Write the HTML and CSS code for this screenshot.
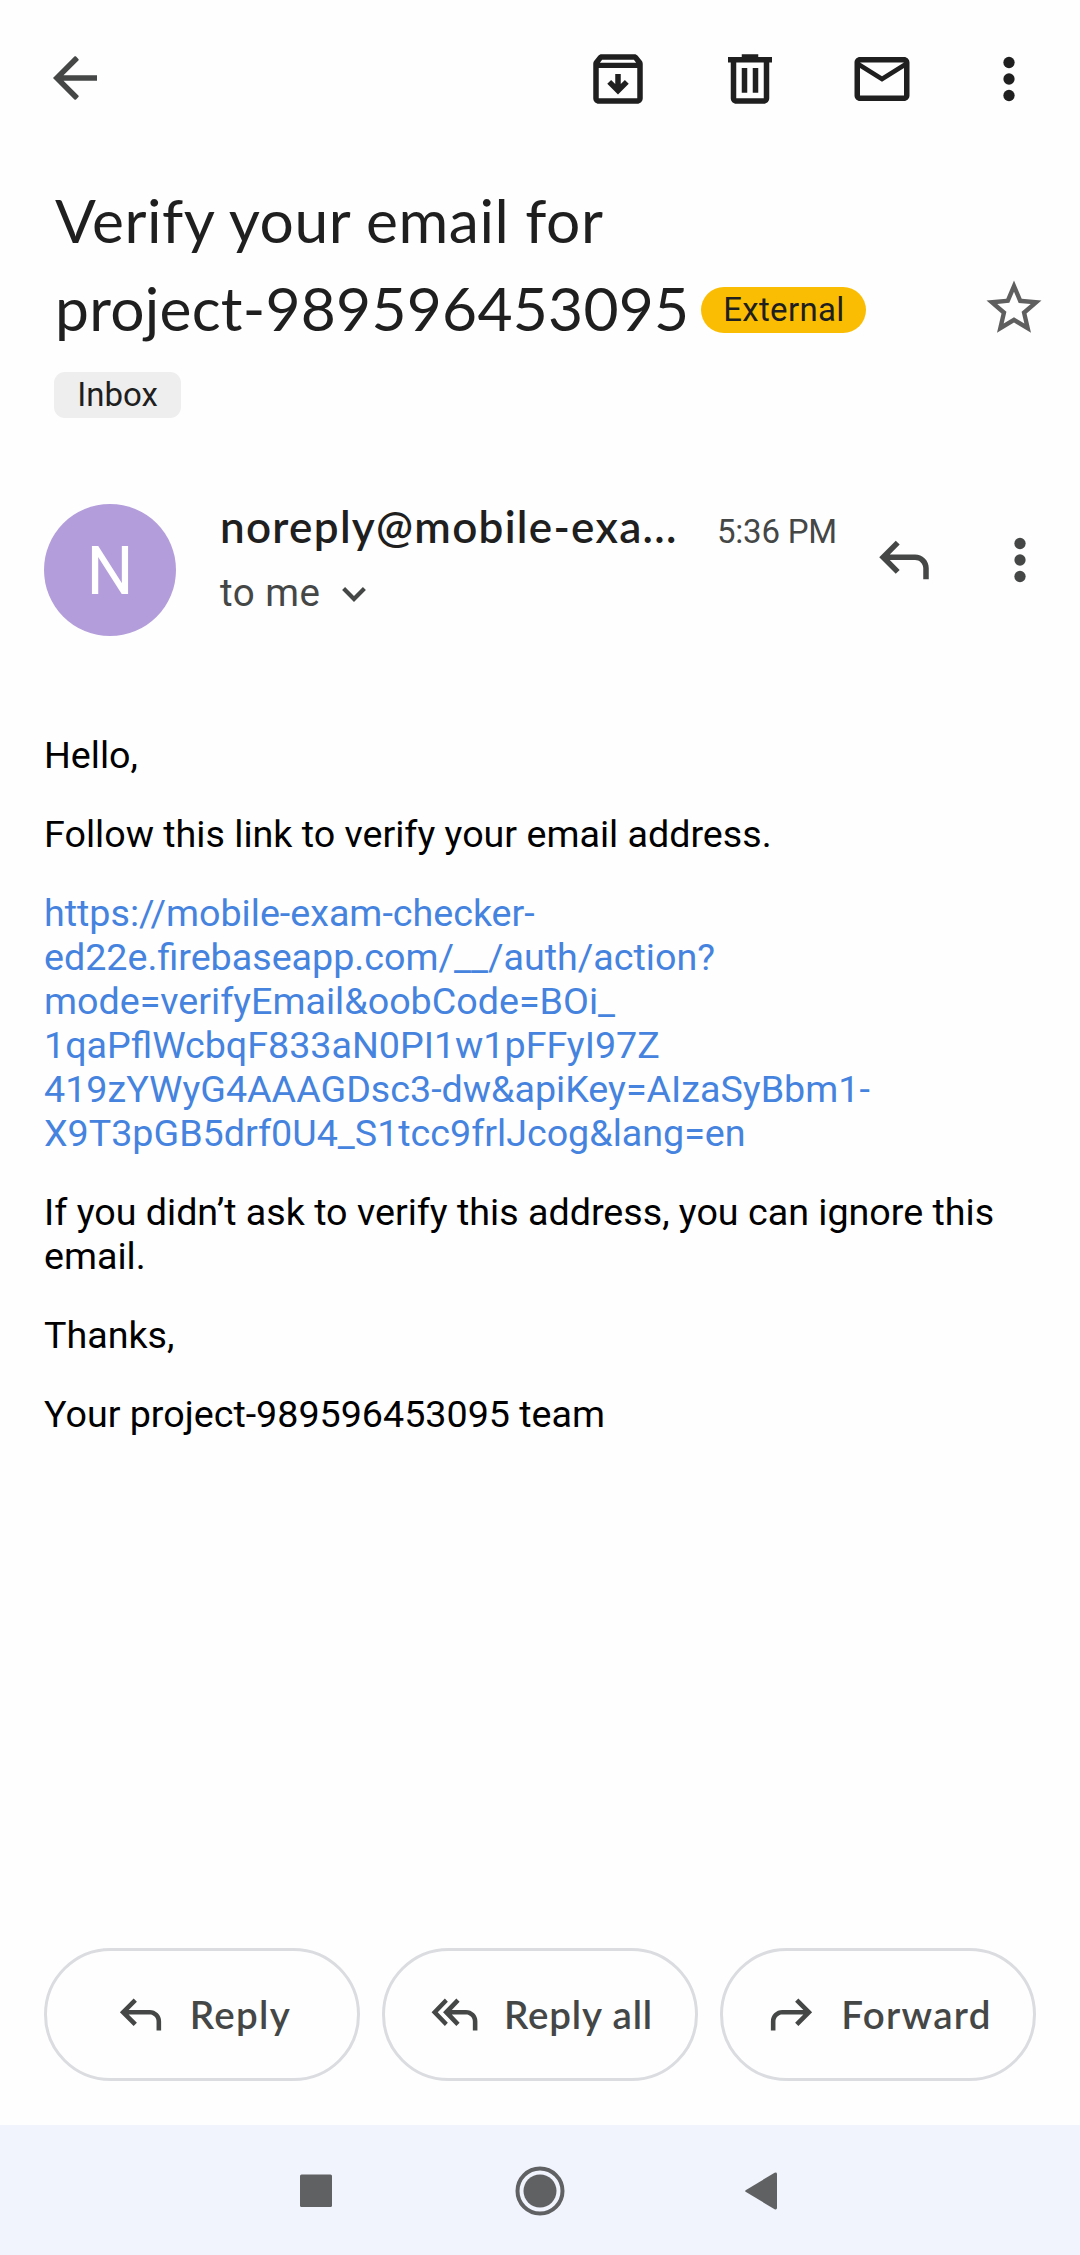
FILE: index.html
```html
<!DOCTYPE html>
<html lang="en">
<head>
<meta charset="utf-8">
<title>Verify your email for project-989596453095</title>
<link rel="stylesheet" href="styles.css">
</head>
<body>
<header class="toolbar">
  <svg class="icon icon-back" viewBox="0 0 24 24"><path d="M20 11H7.83l5.4-5.4c.2-.2.2-.35 0-.55l-.85-.85c-.2-.2-.4-.2-.6 0L4 12l7.78 7.8c.2.2.4.2.6 0l.85-.85c.2-.2.2-.35 0-.55L7.83 13H20z"/></svg>
  <div class="toolbar-actions">
    <svg class="icon" viewBox="0 0 24 24"><path fill-rule="evenodd" d="M20.54 5.23l-1.39-1.68C18.88 3.21 18.47 3 18 3H6c-.47 0-.88.21-1.16.55L3.46 5.23C3.17 5.57 3 6.02 3 6.5V19c0 1.1.9 2 2 2h14c1.1 0 2-.9 2-2V6.5c0-.48-.17-.93-.46-1.27zM6.24 5h11.52l.83 1.1H5.42zM5 19V8h14v11zM11 10.2h2v3.6l1.5-1.45 1.4 1.4-3.9 3.9-3.9-3.9 1.4-1.4 1.5 1.45z"/></svg>
    <svg class="icon" viewBox="0 0 24 24"><path fill-rule="evenodd" d="M15 4V3H9v1H4v2h1v13c0 1.1.9 2 2 2h10c1.1 0 2-.9 2-2V6h1V4zm2 15H7V6h10zM9 8h2v9H9zm4 0h2v9h-2z"/></svg>
    <svg class="icon" viewBox="0 0 24 24"><path fill-rule="evenodd" d="M22 6c0-1.1-.9-2-2-2H4c-1.1 0-2 .9-2 2v12c0 1.1.9 2 2 2h16c1.1 0 2-.9 2-2zm-2 0l-8 5-8-5zm0 12H4V8l8 5 8-5z"/></svg>
    <svg class="icon icon-more" viewBox="0 0 24 24"><circle cx="12" cy="6" r="2.05"/><circle cx="12" cy="12" r="2.05"/><circle cx="12" cy="18" r="2.05"/></svg>
  </div>
</header>

<section class="subject">
  <div>
    <h1 class="subject-title">Verify your email for<br><span class="subject-project">project-989596453095</span><span class="chip chip-external">External</span></h1>
    <span class="chip chip-inbox">Inbox</span>
  </div>
  <svg class="icon icon-star" viewBox="0 0 24 24"><path fill-rule="evenodd" d="M22 9.24l-7.19-.62L12 2 9.19 8.63 2 9.24l5.46 4.73L5.82 21 12 17.27 18.18 21l-1.63-7.03zM12 15.4l-3.76 2.27 1-4.28-3.32-2.88 4.38-.38L12 6.1l1.71 4.04 4.38.38-3.32 2.88 1 4.28z"/></svg>
</section>

<section class="sender">
  <div class="avatar">N</div>
  <div class="sender-info">
    <div class="sender-line"><span class="sender-name">noreply@mobile-exa...</span><span class="sender-time">5:36 PM</span></div>
    <div class="recipient">to me <svg class="chevron" viewBox="0 0 24 15"><path d="M1.6 1.6L12 12 22.4 1.6"/></svg></div>
  </div>
  <div class="sender-actions">
    <svg class="icon" viewBox="0 0 24 24"><path d="M19 19v-4c0-.83-.29-1.54-.88-2.12C17.54 12.29 16.83 12 16 12H6.83l3.6 3.6L9 17l-6-6 6-6 1.43 1.4L6.83 10H16c1.38 0 2.56.49 3.54 1.46C20.51 12.44 21 13.62 21 15v4z"/></svg>
    <svg class="icon" viewBox="0 0 24 24"><circle cx="12" cy="6" r="2.05"/><circle cx="12" cy="12" r="2.05"/><circle cx="12" cy="18" r="2.05"/></svg>
  </div>
</section>

<main class="message">
  <p>Hello,</p>
  <p>Follow this link to verify your email address.</p>
  <p><a class="link">https://mobile-exam-checker-<br>ed22e.firebaseapp.com/__/auth/action?<br>mode=verifyEmail&amp;oobCode=BOi_<br>1qaPflWcbqF833aN0PI1w1pFFyI97Z<br>419zYWyG4AAAGDsc3-dw&amp;apiKey=AIzaSyBbm1-<br>X9T3pGB5drf0U4_S1tcc9frlJcog&amp;lang=en</a></p>
  <p>If you didn’t ask to verify this address, you can ignore this<br>email.</p>
  <p>Thanks,</p>
  <p>Your project-989596453095 team</p>
</main>

<div class="actions">
  <button class="action" type="button"><svg class="action-icon" viewBox="0 0 24 24"><path d="M19 19v-4c0-.83-.29-1.54-.88-2.12C17.54 12.29 16.83 12 16 12H6.83l3.6 3.6L9 17l-6-6 6-6 1.43 1.4L6.83 10H16c1.38 0 2.56.49 3.54 1.46C20.51 12.44 21 13.62 21 15v4z"/></svg><span>Reply</span></button>
  <button class="action reply-all" type="button"><svg class="action-icon" viewBox="0 0 24 24"><path d="M7.8 17L2 11l5.8-6 1.3 1.4L4.7 11l4.4 4.6zM20 19v-4c0-.83-.29-1.54-.88-2.12C18.54 12.29 17.83 12 17 12h-6.17l3.4 3.6L12.8 17 7 11l5.8-6 1.43 1.4-3.4 3.6H17c1.38 0 2.56.49 3.54 1.46C21.51 12.44 22 13.62 22 15v4z"/></svg><span>Reply all</span></button>
  <button class="action" type="button"><svg class="action-icon" viewBox="0 0 24 24"><path d="M5 19v-4c0-.83.29-1.54.88-2.12C6.46 12.29 7.17 12 8 12h9.17l-3.6 3.6L15 17l6-6-6-6-1.43 1.4 3.6 3.6H8c-1.38 0-2.56.49-3.54 1.46C3.49 12.44 3 13.62 3 15v4z"/></svg><span>Forward</span></button>
</div>

<nav class="navbar">
  <svg class="nav-icon" viewBox="0 0 50 50"><rect x="9" y="8.5" width="32" height="32.5" rx="1.5"/></svg>
  <svg class="nav-icon" viewBox="0 0 50 50"><circle cx="25" cy="25" r="22.5" fill="none" stroke="#606163" stroke-width="4"/><circle cx="25" cy="25" r="16.5"/></svg>
  <svg class="nav-icon" viewBox="0 0 50 50"><path d="M6.6 24.2L35.6 6.8Q37.8 6 38 8V42Q37.8 44 35.6 43.2L6.6 25.8Q5.8 25 6.6 24.2z"/></svg>
</nav>
</body>
</html>
```
FILE: styles.css
```css
* { box-sizing: border-box; }

body {
  margin: 0;
  width: 1080px;
  height: 2255px;
  display: flex;
  flex-direction: column;
  background: #fefefe;
  color: #1f1f1f;
  font-family: Roboto, "Liberation Sans", sans-serif;
}

.icon {
  display: block;
  flex: none;
  width: 66px;
  height: 66px;
  fill: currentColor;
}

.toolbar {
  display: flex;
  align-items: center;
  justify-content: space-between;
  height: 158px;
  padding: 0 38px 0 42px;
}

.icon-back { color: #444746; margin-bottom: 3px; }

.toolbar-actions { display: flex; gap: 66px; }
.icon-more { margin-left: -5px; }

.subject {
  display: flex;
  justify-content: space-between;
  padding: 18px 33px 0 54px;
}

.subject-title {
  margin: 0;
  padding-left: 1px;
  font: 400 60.5px/88px Lato, "Open Sans", sans-serif;
  letter-spacing: 0.55px;
  white-space: nowrap;
}

.subject-project { letter-spacing: 0.24px; }

.chip {
  height: 46px;
  font: 400 33px/46px Roboto, sans-serif;
  text-align: center;
}

.chip-external {
  display: inline-block;
  width: 165px;
  margin-left: 12px;
  border-radius: 23px;
  background: #fabd03;
  letter-spacing: 0.3px;
  vertical-align: 10px;
}

.chip-inbox {
  display: block;
  width: 127px;
  margin-top: 20px;
  border-radius: 11px;
  background: #eee;
}

.icon-star { margin-top: 99px; color: #5f5f5f; }

.sender {
  display: flex;
  margin-top: 82px;
  padding: 0 27px 0 44px;
}

.avatar {
  flex: none;
  width: 132px;
  height: 132px;
  margin-top: 4px;
  padding-top: 2px;
  border-radius: 50%;
  background: #b39ddb;
  color: #fff;
  font-size: 66px;
  line-height: 132px;
  text-align: center;
}

.sender-info { width: 617px; margin-left: 44px; }

.sender-line {
  display: flex;
  justify-content: space-between;
  align-items: baseline;
  white-space: nowrap;
}

.sender-name {
  font: 600 44px/52px Lato, "Open Sans", sans-serif;
  letter-spacing: 1.28px;
}

.sender-time {
  font-size: 33px;
  letter-spacing: -0.19px;
  color: #444746;
}

.recipient {
  display: flex;
  align-items: center;
  margin-top: 17px;
  font-size: 38.5px;
  line-height: 48px;
  letter-spacing: 0.5px;
  color: #444746;
}

.chevron {
  width: 24px;
  height: 15px;
  margin: 2px 0 0 22px;
  fill: none;
  stroke: #444746;
  stroke-width: 4.2;
}

.sender-actions {
  display: flex;
  gap: 50px;
  margin: 26.5px 0 0 34px;
  color: #444746;
}

.message {
  flex: 1;
  margin-top: 97px;
  padding: 0 44px;
  color: #000;
  font-size: 37.65px;
  line-height: 44px;
  white-space: nowrap;
}

.message p { margin: 0 0 35px; }
.link { color: #4583df; }

.actions {
  display: grid;
  grid-template-columns: repeat(3, 1fr);
  gap: 22px;
  padding: 0 44px;
  margin-bottom: 44px;
}

.action {
  display: flex;
  align-items: center;
  justify-content: center;
  gap: 22px;
  height: 133px;
  padding: 0 0 1px;
  border: 3px solid #dadce0;
  border-radius: 67px;
  background: transparent;
  color: #444746;
  font: 600 38.5px/48px Lato, "Open Sans", sans-serif;
  letter-spacing: 1.3px;
  white-space: nowrap;
}

.reply-all { letter-spacing: 0.85px; }

.action-icon {
  width: 55px;
  height: 55px;
  fill: currentColor;
}

.navbar {
  display: flex;
  align-items: center;
  justify-content: center;
  gap: 174px;
  height: 130px;
  padding-top: 1px;
  background: #f1f4fd;
}

.nav-icon {
  width: 50px;
  height: 50px;
  fill: #606163;
}
```
